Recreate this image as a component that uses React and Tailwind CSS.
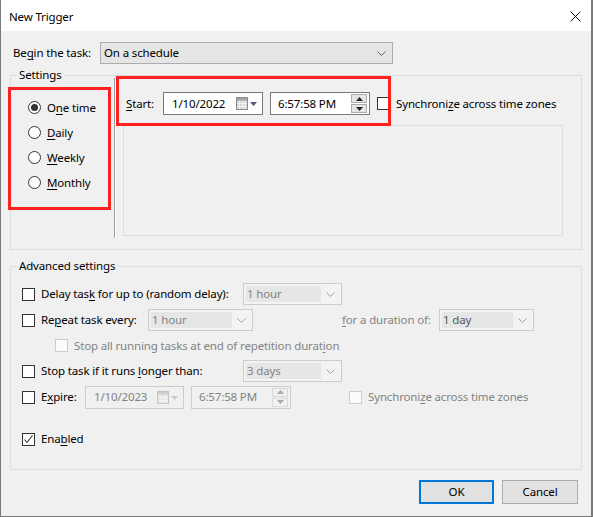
import React from "react";

const U = ({ children }) => (
  <span className="underline underline-offset-[2px] decoration-1">{children}</span>
);

const Chevron = ({ color = "#606060" }) => (
  <svg width="9" height="5" viewBox="0 0 9 5">
    <polyline points="0.5,0.5 4.5,4.5 8.5,0.5" fill="none" stroke={color} strokeWidth="1" />
  </svg>
);

const Combo = ({ text, w, disabled, dark }) => (
  <div
    className={`h-[22px] ${w} border flex items-stretch p-[2px] ${
      disabled ? "border-[#cccccc] bg-[#f3f3f3]" : "border-[#adadad] bg-[#e5e5e5]"
    }`}
  >
    <div
      className={`flex-1 flex items-center pl-[1px] ${disabled ? "bg-[#e6e6e6]" : ""} ${
        disabled ? (dark ? "text-[#555555]" : "text-[#838383]") : "text-black"
      }`}
    >
      {text}
    </div>
    <div className="w-[18px] flex items-center justify-center">
      <Chevron color={disabled ? "#a0a0a0" : "#606060"} />
    </div>
  </div>
);

const Checkbox = ({ checked, disabled }) => (
  <span
    className={`w-[13px] h-[13px] shrink-0 border flex items-center justify-center ${
      disabled ? "border-[#cccccc] bg-[#fbfbfb]" : "border-[#333333] bg-white"
    }`}
  >
    {checked && (
      <svg width="11" height="11" viewBox="0 0 11 11">
        <polyline points="1.5,5.5 4,8.5 9.5,1.5" fill="none" stroke="#333" strokeWidth="1.1" />
      </svg>
    )}
  </span>
);

const Radio = ({ checked }) => (
  <span className="w-[13px] h-[13px] shrink-0 rounded-full border border-[#333333] bg-white flex items-center justify-center">
    {checked && <span className="w-[7px] h-[7px] rounded-full bg-[#333333]" />}
  </span>
);

const CalIcon = ({ disabled }) => (
  <svg width="22" height="13" viewBox="0 0 22 13">
    <rect x="0.5" y="0.5" width="11" height="12" fill={disabled ? "#e4e4e4" : "#d6d6d6"} stroke={disabled ? "#c4c4c4" : "#8c8c8c"} />
    <rect x="1" y="1" width="10" height="2.5" fill={disabled ? "#cfcfcf" : "#a2a2a2"} />
    <path d="M3.5 4v8M6.5 4v8M9 4v8M1 6.5h10M1 9.5h10" stroke={disabled ? "#f4f4f4" : "#f2f2f2"} strokeWidth="1" />
    <path d="M14 5h7l-3.5 4z" fill={disabled ? "#c8c8c8" : "#4f5b7a"} />
  </svg>
);

const Tri = ({ up, disabled }) => (
  <svg width="7" height="4" viewBox="0 0 7 4">
    <path d={up ? "M0 4h7L3.5 0z" : "M0 0h7L3.5 4z"} fill={disabled ? "#a8a8a8" : "#222"} />
  </svg>
);

const Spin = ({ disabled }) => (
  <div className="flex flex-col gap-[1px] mr-[1px]">
    <div className={`w-[16px] h-[9px] border flex items-center justify-center ${disabled ? "border-[#d8d8d8] bg-[#f0f0f0]" : "border-[#acacac] bg-[#e5e5e5]"}`}>
      <Tri up disabled={disabled} />
    </div>
    <div className={`w-[16px] h-[9px] border flex items-center justify-center ${disabled ? "border-[#d8d8d8] bg-[#f0f0f0]" : "border-[#acacac] bg-[#e5e5e5]"}`}>
      <Tri disabled={disabled} />
    </div>
  </div>
);

const DateBox = ({ text, disabled, w }) => (
  <div
    className={`${w} h-[23px] border flex items-center justify-between pl-[8px] pr-[4px] ${
      disabled ? "border-[#cccccc] bg-[#f0f0f0] text-[#838383]" : "border-[#7a7a7a] bg-white text-black"
    }`}
  >
    <span>{text}</span>
    <CalIcon disabled={disabled} />
  </div>
);

const TimeBox = ({ text, disabled }) => (
  <div
    className={`w-[100px] h-[23px] border flex items-center justify-between pl-[7px] pr-[1px] ${
      disabled ? "border-[#cccccc] bg-[#f0f0f0] text-[#838383]" : "border-[#7a7a7a] bg-white text-black"
    }`}
  >
    <span>{text}</span>
    <Spin disabled={disabled} />
  </div>
);

const GroupHeader = ({ label }) => (
  <div className="flex h-[16px]">
    <div className="w-[7px] h-[8px] self-end border-l border-t border-[#dcdcdc]" />
    <span className="px-[2px] leading-[16px]">{label}</span>
    <div className="flex-1 h-[8px] self-end border-r border-t border-[#dcdcdc]" />
  </div>
);

export default function App() {
  return (
    <div className="relative w-[593px] h-[517px] bg-[#f0f0f0] border-l border-r-2 border-b border-[#7a7a7a] overflow-hidden font-['Noto_Sans',sans-serif] text-[11.5px] tracking-[-0.15px] leading-[16px] text-black">
      {/* Title bar */}
      <div className="h-[31px] bg-white flex items-center justify-between pl-[8px] pr-[10px] pt-[2px]">
        <span>New Trigger</span>
        <svg width="11" height="11" viewBox="0 0 11 11">
          <path d="M0.5 0.5L10.5 10.5M10.5 0.5L0.5 10.5" stroke="#111" strokeWidth="1" />
        </svg>
      </div>

      {/* Begin the task */}
      <div className="flex items-center pl-[12px] mt-[11px]">
        <span className="w-[87px]">
          Be<U>g</U>in the task:
        </span>
        <Combo text="On a schedule" w="w-[293px]" />
      </div>

      {/* Settings group */}
      <div className="ml-[9px] w-[572px] mt-[3px] flex flex-col">
        <GroupHeader label="Settings" />
        <div className="h-[167px] border-l border-r border-b border-[#dcdcdc] flex">
          <div className="w-[103px] flex flex-col pt-[12px] pl-[17px]">
            {[
              ["O", "n", "e time", true],
              ["", "D", "aily", false],
              ["", "W", "eekly", false],
              ["", "M", "onthly", false],
            ].map(([a, u, b, c], i) => (
              <div key={i} className="h-[25px] flex items-center">
                <Radio checked={c} />
                <span className="ml-[6px]">
                  {a}
                  <U>{u}</U>
                  {b}
                </span>
              </div>
            ))}
          </div>
          <div className="flex -mt-[5px] h-[160px]">
            <div className="w-[1px] bg-[#a0a0a0]" />
            <div className="w-[1px] bg-white" />
          </div>
          <div className="flex flex-col">
            <div className="flex items-center mt-[9px] pl-[10px]">
              <span className="w-[37px]">
                <U>S</U>tart:
              </span>
              <DateBox text="1/10/2022" w="w-[100px]" />
              <div className="ml-[7px]">
                <TimeBox text="6:57:58 PM" />
              </div>
              <div className="ml-[7px]">
                <Checkbox />
              </div>
              <span className="ml-[6px]">
                Synchroni<U>z</U>e across time zones
              </span>
            </div>
            <div className="ml-[7px] mt-[10px] w-[440px] h-[111px] border border-[#dcdcdc]" />
          </div>
        </div>
      </div>

      {/* Advanced settings */}
      <div className="ml-[9px] w-[572px] mt-[8px] flex flex-col">
        <GroupHeader label="Advanced settings" />
        <div className="h-[196px] border-l border-r border-b border-[#dcdcdc] flex flex-col pt-[7px] pl-[11px]">
          <div className="h-[26px] flex items-center">
            <div className="w-[221px] flex items-center">
              <Checkbox />
              <span className="ml-[6px]">
                Delay tas<U>k</U> for up to (random delay):
              </span>
            </div>
            <Combo text="1 hour" w="w-[99px]" disabled />
          </div>
          <div className="h-[26px] flex items-center">
            <div className="w-[126px] flex items-center">
              <Checkbox />
              <span className="ml-[6px]">
                Re<U>p</U>eat task every:
              </span>
            </div>
            <Combo text="1 hour" w="w-[105px]" disabled />
            <span className="ml-[89px] w-[97px] text-[#838383]">
              <U>f</U>or a duration of:
            </span>
            <Combo text="1 day" w="w-[95px]" disabled dark />
          </div>
          <div className="h-[25px] flex items-center pl-[33px]">
            <Checkbox disabled />
            <span className="ml-[6px] text-[#838383]">
              Stop all running tasks at end of repetition durat<U>i</U>on
            </span>
          </div>
          <div className="h-[26px] flex items-center">
            <div className="w-[221px] flex items-center">
              <Checkbox />
              <span className="ml-[6px]">
                Stop task if it runs <U>l</U>onger than:
              </span>
            </div>
            <Combo text="3 days" w="w-[99px]" disabled />
          </div>
          <div className="h-[26px] flex items-center">
            <div className="w-[63px] flex items-center">
              <Checkbox />
              <span className="ml-[6px]">
                E<U>x</U>pire:
              </span>
            </div>
            <DateBox text="1/10/2023" w="w-[99px]" disabled />
            <div className="ml-[7px]">
              <TimeBox text="6:57:58 PM" disabled />
            </div>
            <div className="ml-[58px]">
              <Checkbox disabled />
            </div>
            <span className="ml-[6px] text-[#838383]">
              Synchroni<U>z</U>e across time zones
            </span>
          </div>
          <div className="h-[26px] flex items-center mt-[16px]">
            <Checkbox checked />
            <span className="ml-[6px]">
              Ena<U>b</U>led
            </span>
          </div>
        </div>
      </div>

      {/* Buttons */}
      <div className="flex justify-end mt-[10px] pr-[13px] gap-[8px]">
        <button className="w-[75px] h-[24px] border-2 border-[#0078d7] bg-[#e1e1e1] flex items-center justify-center">
          OK
        </button>
        <button className="w-[76px] h-[24px] border border-[#adadad] bg-[#e1e1e1] flex items-center justify-center">
          Cancel
        </button>
      </div>

      {/* Red annotation boxes */}
      <div className="absolute left-[7px] top-[87px] w-[103px] h-[123px] border-[3px] border-[#ff2020] pointer-events-none" />
      <div className="absolute left-[115px] top-[76px] w-[275px] h-[50px] border-[3px] border-[#ff2020] pointer-events-none" />
    </div>
  );
}
